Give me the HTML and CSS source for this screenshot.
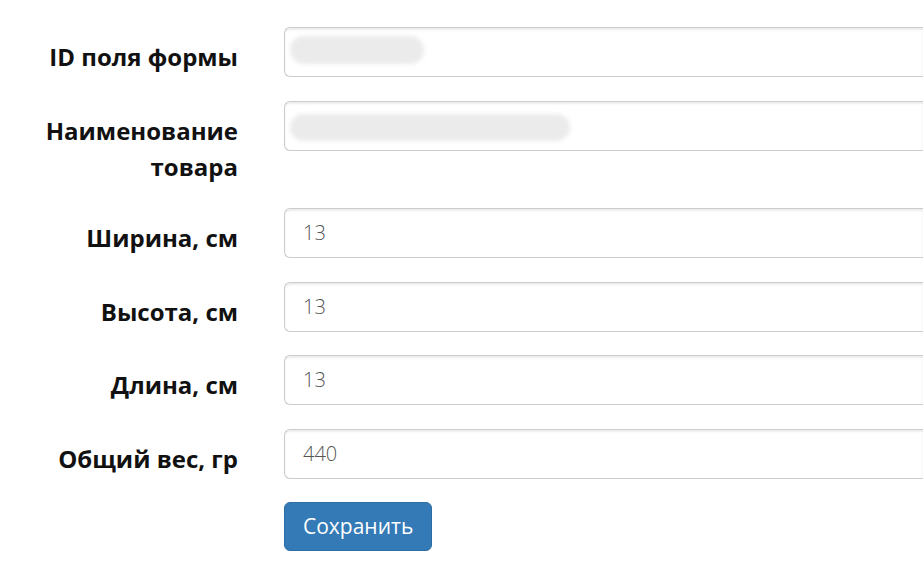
FILE: index.html
```html
<!DOCTYPE html>
<html lang="ru">
<head>
<meta charset="utf-8">
<title>Форма</title>
<link rel="stylesheet" href="styles.css">
</head>
<body>
<form class="form">
  <label class="label">ID поля формы</label>
  <div class="field"><div class="input"></div><span class="blur blur-1"></span></div>

  <label class="label">Наименование товара</label>
  <div class="field"><div class="input"></div><span class="blur blur-2"></span></div>

  <label class="label">Ширина, см</label>
  <div class="field"><div class="input">13</div></div>

  <label class="label">Высота, см</label>
  <div class="field"><div class="input">13</div></div>

  <label class="label">Длина, см</label>
  <div class="field"><div class="input">13</div></div>

  <label class="label">Общий вес, гр</label>
  <div class="field"><div class="input">440</div></div>

  <div class="spacer"></div>
  <div class="actions"><button type="button" class="btn">Сохранить</button></div>
</form>
</body>
</html>
```
FILE: styles.css
```css
html, body {
  margin: 0;
  padding: 0;
  background: #fff;
  overflow: hidden;
}
body {
  width: 923px;
  height: 568px;
  font-family: "Open Sans", "Liberation Sans", sans-serif;
}
.form {
  display: grid;
  grid-template-columns: 238px 1fr;
  column-gap: 46px;
  row-gap: 23.5px;
  padding-top: 27px;
  align-items: start;
}
.label {
  font-size: 24px;
  font-weight: 700;
  line-height: 36px;
  color: #111;
  text-align: right;
  padding-top: 12px;
}
.field {
  position: relative;
}
.input {
  box-sizing: border-box;
  height: 50px;
  border: 1px solid #ccc;
  border-right: none;
  border-radius: 6px 0 0 6px;
  box-shadow: inset 0 2px 2px rgba(0,0,0,0.075);
  padding: 0 18px;
  font-size: 20px;
  font-weight: 300;
  line-height: 48px;
  color: #555;
}
.blur {
  position: absolute;
  background: #ebebeb;
  border-radius: 14px;
  filter: blur(2px);
}
.blur-1 {
  left: 6px;
  top: 9px;
  width: 134px;
  height: 28px;
}
.blur-2 {
  left: 6px;
  top: 13px;
  width: 280px;
  height: 27px;
}
.btn {
  box-sizing: border-box;
  height: 49px;
  padding: 0 18px;
  background: #337ab7;
  border: 1px solid #2e6da4;
  border-radius: 6px;
  color: #fff;
  font-family: "Open Sans", "Liberation Sans", sans-serif;
  font-size: 21px;
  line-height: 47px;
}
```
